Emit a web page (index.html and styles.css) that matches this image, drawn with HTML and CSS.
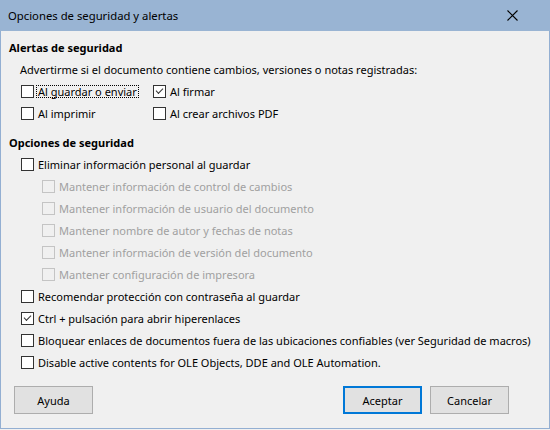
FILE: index.html
```html
<!DOCTYPE html>
<html lang="es"><head>
  <meta charset="utf-8">
  <title>Opciones de seguridad y alertas</title>
  <link rel="stylesheet" href="styles.css">
</head>
<body>

<div class="dialog">
  <div class="titlebar">
    <span class="title">Opciones de seguridad y alertas</span>
    <svg class="close" width="11" height="11" viewBox="0 0 11 11"><path d="M0.5 0.5L10.5 10.5M10.5 0.5L0.5 10.5" stroke="#000" stroke-width="1.1"/></svg>
  </div>

  <div class="content">
    <div class="row head">Alertas de seguridad</div>
    <div class="row note">Advertirme si el documento contiene cambios, versiones o notas registradas:</div>
    <div class="pair">
      <div class="row opt"><span class="box"></span><span class="focus">Al guardar o enviar</span></div>
      <div class="row opt"><span class="box on"></span>Al firmar</div>
      <div class="row opt"><span class="box"></span>Al imprimir</div>
      <div class="row opt"><span class="box"></span>Al crear archivos PDF</div>
    </div>

    <div class="row head gap">Opciones de seguridad</div>
    <div class="row opt"><span class="box"></span>Eliminar información personal al guardar</div>
    <div class="row opt sub off"><span class="box"></span>Mantener información de control de cambios</div>
    <div class="row opt sub off"><span class="box"></span>Mantener información de usuario del documento</div>
    <div class="row opt sub off"><span class="box"></span>Mantener nombre de autor y fechas de notas</div>
    <div class="row opt sub off"><span class="box"></span>Mantener información de versión del documento</div>
    <div class="row opt sub off"><span class="box"></span>Mantener configuración de impresora</div>
    <div class="row opt"><span class="box"></span>Recomendar protección con contraseña al guardar</div>
    <div class="row opt"><span class="box on"></span>Ctrl + pulsación para abrir hiperenlaces</div>
    <div class="row opt"><span class="box"></span>Bloquear enlaces de documentos fuera de las ubicaciones confiables (ver Seguridad de macros)</div>
    <div class="row opt"><span class="box"></span>Disable active contents for OLE Objects, DDE and OLE Automation.</div>
  </div>

  <div class="buttons">
    <button class="btn">Ayuda</button>
    <span class="spacer"></span>
    <button class="btn default">Aceptar</button>
    <button class="btn">Cancelar</button>
  </div>
</div>

</body></html>
```

FILE: styles.css
```css
body,html { margin:0; padding:0; background:#f0f0f0; color:#000; font:11px/1 "Noto Sans", "Open Sans", sans-serif; }

.dialog {
  width: 548px;
  height: 428px;
  border: 1px solid #93afd2;
  border-top: 0;
  background: #f0f0f0;
  display: flex;
  flex-direction: column;
}

.titlebar {
  height: 31px;
  background: #99b4d3;
  display: flex;
  align-items: center;
  padding: 0 32px 0 8px;
  margin: 0 -1px;
}
.title {
  flex: 1;
  font-size: 11.3px;
}
.close {
  display: block;
}

.content {
  padding: 5px 0 0 8px;
}

.row {
  height: 22px;
  display: flex;
  align-items: center;
  white-space: nowrap;
}
.head {
  font-weight: bold;
}
.head.gap {
  margin-top: 7px;
}
.note {
  padding-left: 11px;
}
.opt {
  padding-left: 12px;
}
.sub {
  padding-left: 33px;
}
.off {
  color: #a0a0a0;
}

.pair {
  display: grid;
  grid-template-columns: 132px auto;
}

.box {
  width: 11px;
  height: 11px;
  border: 1px solid #333;
  background: #fff;
  margin-right: 4px;
  position: relative;
  flex: none;
}
.off .box {
  border-color: #c4c4c4;
  background: #f0f0f0;
}
.box.on::after {
  content: "";
  position: absolute;
  left: 2px;
  top: 0px;
  width: 6px;
  height: 3px;
  border-left: 1px solid #333;
  border-bottom: 1px solid #333;
  transform: translate(0, 2px) rotate(-45deg);
  transform-origin: center;
}

.focus {
  outline: 1px dotted #000;
  outline-offset: 0;
  padding: 0 1px;
  margin-left: -1px;
}

.buttons {
  margin-top: auto;
  display: flex;
  gap: 8px;
  padding: 0 40px 14px 13px;
}
.spacer {
  flex: 1;
}
.btn {
  width: 79px;
  height: 28px;
  font: inherit;
  color: #000;
  background: #e1e1e1;
  border: 1px solid #adadad;
  padding: 0;
}
.btn.default {
  border: 2px solid #0078d7;
}
```
